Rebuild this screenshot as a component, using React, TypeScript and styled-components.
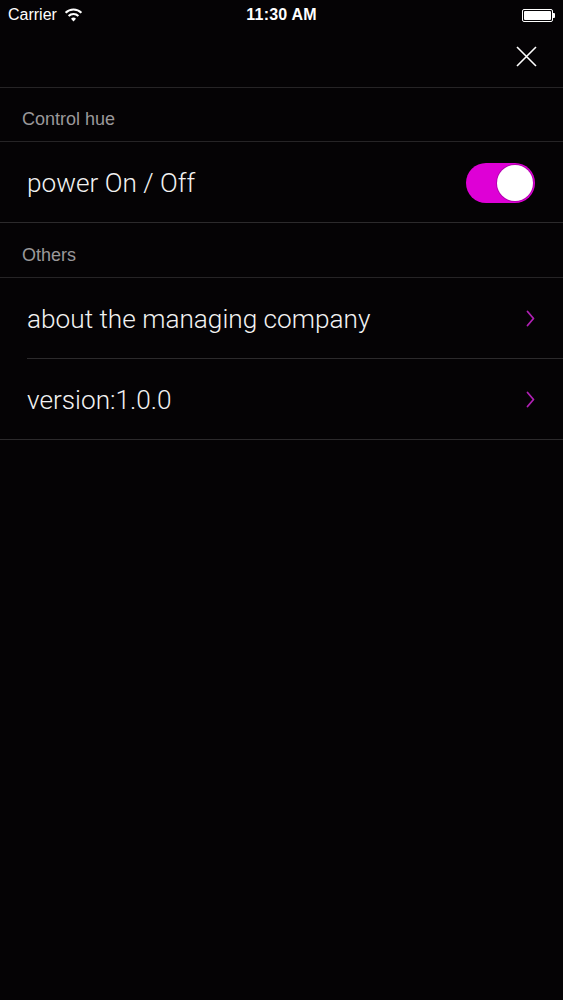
import styled, { createGlobalStyle } from "styled-components";

const GlobalStyle = createGlobalStyle`
  html, body {
    margin: 0;
    padding: 0;
    background: #050305;
  }
  * {
    box-sizing: border-box;
  }
`;

const Page = styled.div`
  display: flex;
  flex-direction: column;
  min-height: 100vh;
  width: 563px;
  background: #050305;
  color: #fff;
  font-family: "Liberation Sans", Arial, sans-serif;
`;

const StatusBar = styled.div`
  display: grid;
  grid-template-columns: 1fr auto 1fr;
  align-items: center;
  height: 30px;
  padding: 0 8px;
  font-size: 16px;
`;

const Carrier = styled.div`
  display: flex;
  align-items: center;
  gap: 7px;
`;

const Time = styled.div`
  font-weight: 700;
  letter-spacing: 0.2px;
`;

const Battery = styled.div`
  justify-self: end;
  display: flex;
  align-items: center;
`;

const BatteryBody = styled.div`
  width: 31px;
  height: 13px;
  border: 1px solid #fff;
  border-radius: 2px;
  padding: 1px;
  &::after {
    content: "";
    display: block;
    width: 100%;
    height: 100%;
    background: #fff;
    border-radius: 1px;
  }
`;

const BatteryNub = styled.div`
  width: 2px;
  height: 5px;
  background: #fff;
  border-radius: 0 1px 1px 0;
`;

const NavBar = styled.div`
  display: flex;
  justify-content: flex-end;
  align-items: center;
  height: 58px;
  padding: 0 26px 0 0;
  border-bottom: 1px solid #262426;
`;

const CloseButton = styled.button`
  background: none;
  border: none;
  padding: 0;
  width: 22px;
  height: 22px;
  display: flex;
  align-items: center;
  justify-content: center;
  margin-top: -4px;
`;

const SectionHeader = styled.div<{ tall?: boolean }>`
  display: flex;
  align-items: center;
  height: ${(p) => (p.tall ? "55px" : "54px")};
  padding: 10px 0 0 22px;
  font-size: 18px;
  color: #9a989a;
  border-bottom: 1px solid #262426;
`;

const Row = styled.div<{ inset?: boolean }>`
  position: relative;
  display: flex;
  align-items: center;
  justify-content: space-between;
  height: 81px;
  padding: 0 28px 0 27px;
  &::after {
    content: "";
    position: absolute;
    bottom: 0;
    right: 0;
    left: ${(p) => (p.inset ? "27px" : "0")};
    height: 1px;
    background: #2c2a2c;
  }
`;

const RowLabel = styled.div`
  font-family: Roboto, "Liberation Sans", sans-serif;
  font-weight: 300;
  font-size: 26.2px;
  color: #f2f2f2;
  margin-top: 1px;
`;

const Toggle = styled.div<{ on: boolean }>`
  width: 69px;
  height: 40px;
  border-radius: 20px;
  background: ${(p) => (p.on ? "#de00d6" : "#333")};
  display: flex;
  align-items: center;
  justify-content: ${(p) => (p.on ? "flex-end" : "flex-start")};
  padding: 2px;
`;

const Knob = styled.div`
  width: 36px;
  height: 36px;
  border-radius: 50%;
  background: #fff;
  box-shadow: 0 0 0 1px #b400b0;
`;

const Chevron = () => (
  <svg width="9" height="17" viewBox="0 0 9 17" fill="none">
    <path
      d="M1.5 1.5L7.5 8.5L1.5 15.5"
      stroke="#b020b4"
      strokeWidth={1.8}
      strokeLinecap="round"
      strokeLinejoin="round"
    />
  </svg>
);

export default function App() {
  return (
    <Page>
      <GlobalStyle />
      <StatusBar>
        <Carrier>
          Carrier
          <svg width="19" height="14" viewBox="0 0 19 14">
            <path d="M9.5 13.5L7 10.7a3.6 3.6 0 0 1 5 0z" fill="#fff" />
            <path
              d="M4.6 8a6.8 6.8 0 0 1 9.8 0"
              stroke="#fff"
              strokeWidth={2}
              fill="none"
            />
            <path
              d="M1.6 4.8a11 11 0 0 1 15.8 0"
              stroke="#fff"
              strokeWidth={2}
              fill="none"
            />
          </svg>
        </Carrier>
        <Time>11:30 AM</Time>
        <Battery>
          <BatteryBody />
          <BatteryNub />
        </Battery>
      </StatusBar>
      <NavBar>
        <CloseButton>
          <svg width="21" height="21" viewBox="0 0 21 21">
            <path
              d="M1 1L20 20M20 1L1 20"
              stroke="#fff"
              strokeWidth={1.6}
            />
          </svg>
        </CloseButton>
      </NavBar>
      <SectionHeader>Control hue</SectionHeader>
      <Row>
        <RowLabel>power On / Off</RowLabel>
        <Toggle on>
          <Knob />
        </Toggle>
      </Row>
      <SectionHeader tall>Others</SectionHeader>
      <Row inset>
        <RowLabel>about the managing company</RowLabel>
        <Chevron />
      </Row>
      <Row>
        <RowLabel>version:1.0.0</RowLabel>
        <Chevron />
      </Row>
    </Page>
  );
}
